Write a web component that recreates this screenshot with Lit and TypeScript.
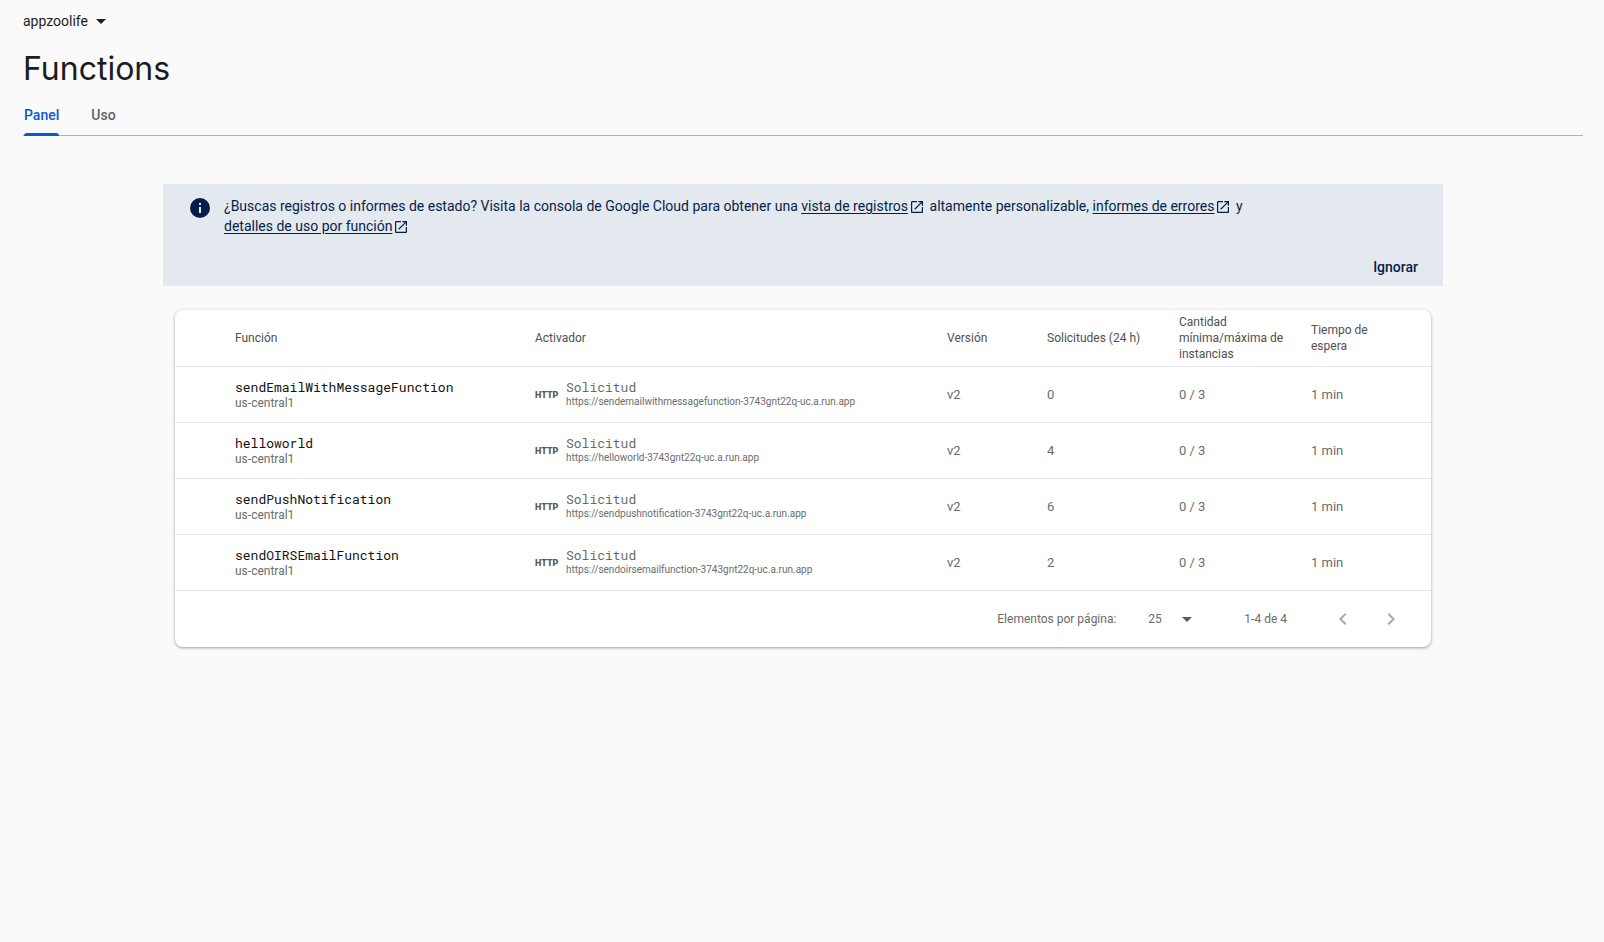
import { LitElement, html, css, svg } from "lit";
import { customElement, property, state } from "lit/decorators.js";

interface CloudFunction {
  name: string;
  region: string;
  url: string;
  version: string;
  requests: number;
  instances: string;
  timeout: string;
}

const FUNCTIONS: CloudFunction[] = [
  ["sendEmailWithMessageFunction", 0],
  ["helloworld", 4],
  ["sendPushNotification", 6],
  ["sendOIRSEmailFunction", 2],
].map(([name, requests]) => ({
  name: name as string,
  region: "us-central1",
  url: `https://${(name as string).toLowerCase()}-3743gnt22q-uc.a.run.app`,
  version: "v2",
  requests: requests as number,
  instances: "0 / 3",
  timeout: "1 min",
}));

const openInNew = html`<svg class="ext" viewBox="0 0 24 24" aria-hidden="true">
  ${svg`<path d="M19.2 19.2H4.8V4.8H12V3H5c-1.1 0-2 .9-2 2v14c0 1.1.9 2 2 2h14c1.1 0 2-.9 2-2v-7h-1.8v7.2zM14 3v1.8h3.9l-10 10 1.3 1.3 10-10V10H21V3h-7z"/>`}
</svg>`;

@customElement("info-banner")
export class InfoBanner extends LitElement {
  static styles = css`
    :host {
      display: block;
      background: #e4e9f0;
      color: #041e49;
      font-size: 14px;
      line-height: 20px;
    }
    .banner {
      display: flex;
      flex-direction: column;
      gap: 15px;
      padding: 12px 25px 3px 27px;
    }
    .message {
      display: flex;
      gap: 14px;
    }
    .info {
      flex: none;
      width: 20px;
      height: 20px;
      margin-top: 2px;
    }
    p {
      margin: 0;
    }
    .link {
      white-space: nowrap;
    }
    a {
      color: inherit;
      text-underline-offset: 2px;
    }
    .ext {
      width: 16px;
      height: 16px;
      margin: 0 1px;
      vertical-align: -4px;
      fill: currentColor;
    }
    button {
      align-self: flex-end;
      height: 32px;
      padding: 0;
      border: 0;
      background: none;
      color: inherit;
      font: 500 14px/20px Roboto, sans-serif;
      cursor: pointer;
    }
  `;

  private link(text: string) {
    return html`<span class="link"><a href="#">${text}</a>${openInNew}</span>`;
  }

  render() {
    return html`<div class="banner">
      <div class="message">
        <svg class="info" viewBox="0 0 20 20" aria-hidden="true">
          <circle cx="10" cy="10" r="10" fill="#041e49" />
          <path d="M9 5h2v2H9zM9 9h2v6H9z" fill="#e4e9f0" />
        </svg>
        <p>
          ¿Buscas registros o informes de estado? Visita la consola de Google Cloud para obtener una
          ${this.link("vista de registros")} altamente personalizable,
          ${this.link("informes de errores")} y ${this.link("detalles de uso por función")}
        </p>
      </div>
      <button type="button" @click=${() => this.dispatchEvent(new Event("dismiss"))}>Ignorar</button>
    </div>`;
  }
}

@customElement("functions-table")
export class FunctionsTable extends LitElement {
  @property({ attribute: false }) rows: CloudFunction[] = [];

  static styles = css`
    :host {
      display: block;
      background: #fff;
      border-radius: 8px;
      box-shadow: 0 1px 2px rgba(60, 64, 67, 0.3), 0 1px 3px 1px rgba(60, 64, 67, 0.15);
      color: #6b6b6b;
      font-size: 13px;
      line-height: 16px;
    }
    table {
      width: 100%;
      table-layout: fixed;
      border-collapse: separate;
      border-spacing: 0;
    }
    .c-lead { width: 48px; }
    .c-name { width: 300px; }
    .c-version { width: 100px; }
    .c-count { width: 132px; }
    .c-time { width: 100px; }
    .c-menu { width: 32px; }
    th,
    td {
      box-sizing: border-box;
      height: 56px;
      padding: 0 0 0 12px;
      border-bottom: 1px solid #e3e5ec;
      text-align: left;
      vertical-align: middle;
    }
    th {
      height: 57px;
      color: #505050;
      font-size: 12px;
      font-weight: 400;
    }
    .name,
    .kind {
      display: block;
      font-family: "Roboto Mono", "Liberation Mono", monospace;
      font-size: 13px;
    }
    .name {
      color: #111;
      text-decoration: none;
    }
    .region {
      display: block;
      font-size: 12px;
    }
    .trigger {
      display: flex;
      align-items: center;
      gap: 8px;
    }
    .http {
      flex: none;
      width: 23px;
      font-size: 9px;
      font-weight: 900;
      color: #5c5c5c;
    }
    .url {
      display: block;
      font-size: 10px;
      line-height: 16px;
      margin-top: -1px;
      color: #6b6b6b;
    }
    .pager {
      display: flex;
      align-items: center;
      justify-content: flex-end;
      height: 56px;
      padding-right: 16px;
      font-size: 12px;
    }
    .size {
      position: relative;
      display: flex;
      align-items: center;
      margin: 0 52px 0 32px;
    }
    select {
      appearance: none;
      width: 44px;
      padding: 0;
      border: 0;
      background: none;
      color: inherit;
      font: 12px/16px Roboto, sans-serif;
    }
    .caret {
      position: absolute;
      right: 0;
      width: 10px;
      height: 5px;
      fill: #5c5c5c;
      pointer-events: none;
    }
    .range {
      margin-right: 32px;
    }
    .nav {
      display: flex;
      padding: 12px;
      border: 0;
      background: none;
    }
    .nav svg {
      width: 24px;
      height: 24px;
      fill: #a8a8a8;
    }
  `;

  private row(f: CloudFunction) {
    return html`<tr>
      <td></td>
      <td><a class="name" href="#">${f.name}</a><span class="region">${f.region}</span></td>
      <td>
        <div class="trigger">
          <span class="http">HTTP</span>
          <div><span class="kind">Solicitud</span><span class="url">${f.url}</span></div>
        </div>
      </td>
      <td>${f.version}</td>
      <td>${f.requests}</td>
      <td>${f.instances}</td>
      <td>${f.timeout}</td>
      <td></td>
    </tr>`;
  }

  render() {
    return html`
      <table>
        <colgroup>
          <col class="c-lead" /><col class="c-name" /><col /><col class="c-version" />
          <col class="c-count" /><col class="c-count" /><col class="c-time" /><col class="c-menu" />
        </colgroup>
        <thead>
          <tr>
            <th></th>
            <th scope="col">Función</th>
            <th scope="col">Activador</th>
            <th scope="col">Versión</th>
            <th scope="col">Solicitudes (24 h)</th>
            <th scope="col">Cantidad mínima/máxima de instancias</th>
            <th scope="col">Tiempo de espera</th>
            <th></th>
          </tr>
        </thead>
        <tbody>${this.rows.map((f) => this.row(f))}</tbody>
      </table>
      <div class="pager">
        <label for="size">Elementos por página:</label>
        <span class="size">
          <select id="size"><option>25</option></select>
          <svg class="caret" viewBox="0 0 10 5" aria-hidden="true"><path d="M0 0h10L5 5z" /></svg>
        </span>
        <span class="range">1-${this.rows.length} de ${this.rows.length}</span>
        <button class="nav" type="button" aria-label="Página anterior" disabled>
          <svg viewBox="0 0 24 24"><path d="M15.41 7.41L14 6l-6 6 6 6 1.41-1.41L10.83 12z" /></svg>
        </button>
        <button class="nav" type="button" aria-label="Página siguiente" disabled>
          <svg viewBox="0 0 24 24"><path d="M10 6L8.59 7.41 13.17 12l-4.58 4.59L10 18l6-6z" /></svg>
        </button>
      </div>
    `;
  }
}

@customElement("app-root")
export class AppRoot extends LitElement {
  @state() private tab = "Panel";
  @state() private showBanner = true;

  static styles = css`
    :host {
      display: block;
      box-sizing: border-box;
      min-height: 100vh;
      padding: 10px 21px 24px 23px;
      background: #fafafa;
      color: #1a1c1e;
      font-family: Roboto, sans-serif;
      font-size: 14px;
      line-height: 20px;
    }
    button {
      border: 0;
      padding: 0;
      background: none;
      font: inherit;
      color: inherit;
      cursor: pointer;
    }
    .project {
      display: flex;
      align-items: center;
      gap: 8px;
      height: 22px;
    }
    .caret {
      width: 10px;
      height: 5px;
      fill: currentColor;
    }
    h1 {
      margin: 17px 0 16px;
      font: 400 32px/40px Inter, sans-serif;
    }
    .tabs {
      display: flex;
      gap: 32px;
      padding-left: 1px;
      border-bottom: 1px solid #a9b4c6;
    }
    .tab {
      position: relative;
      height: 30px;
      padding-bottom: 10px;
      color: #5f6368;
      font-weight: 500;
    }
    .tab.active {
      color: #0b57d0;
    }
    .tab.active::after {
      content: "";
      position: absolute;
      left: 0;
      right: 0;
      bottom: -1px;
      height: 3px;
      border-radius: 3px 3px 0 0;
      background: #0b57d0;
    }
    main {
      display: grid;
      gap: 24px;
      max-width: 1280px;
      margin: 48px auto 0;
    }
    functions-table {
      margin: 0 12px;
    }
  `;

  render() {
    return html`
      <header>
        <button class="project" type="button">
          appzoolife
          <svg class="caret" viewBox="0 0 10 5" aria-hidden="true"><path d="M0 0h10L5 5z" /></svg>
        </button>
        <h1>Functions</h1>
        <div class="tabs" role="tablist">
          ${["Panel", "Uso"].map(
            (t) => html`<button
              type="button"
              role="tab"
              class="tab ${t === this.tab ? "active" : ""}"
              aria-selected=${t === this.tab}
              @click=${() => (this.tab = t)}
            >${t}</button>`,
          )}
        </div>
      </header>
      <main>
        ${this.showBanner
          ? html`<info-banner @dismiss=${() => (this.showBanner = false)}></info-banner>`
          : null}
        <functions-table .rows=${FUNCTIONS}></functions-table>
      </main>
    `;
  }
}
